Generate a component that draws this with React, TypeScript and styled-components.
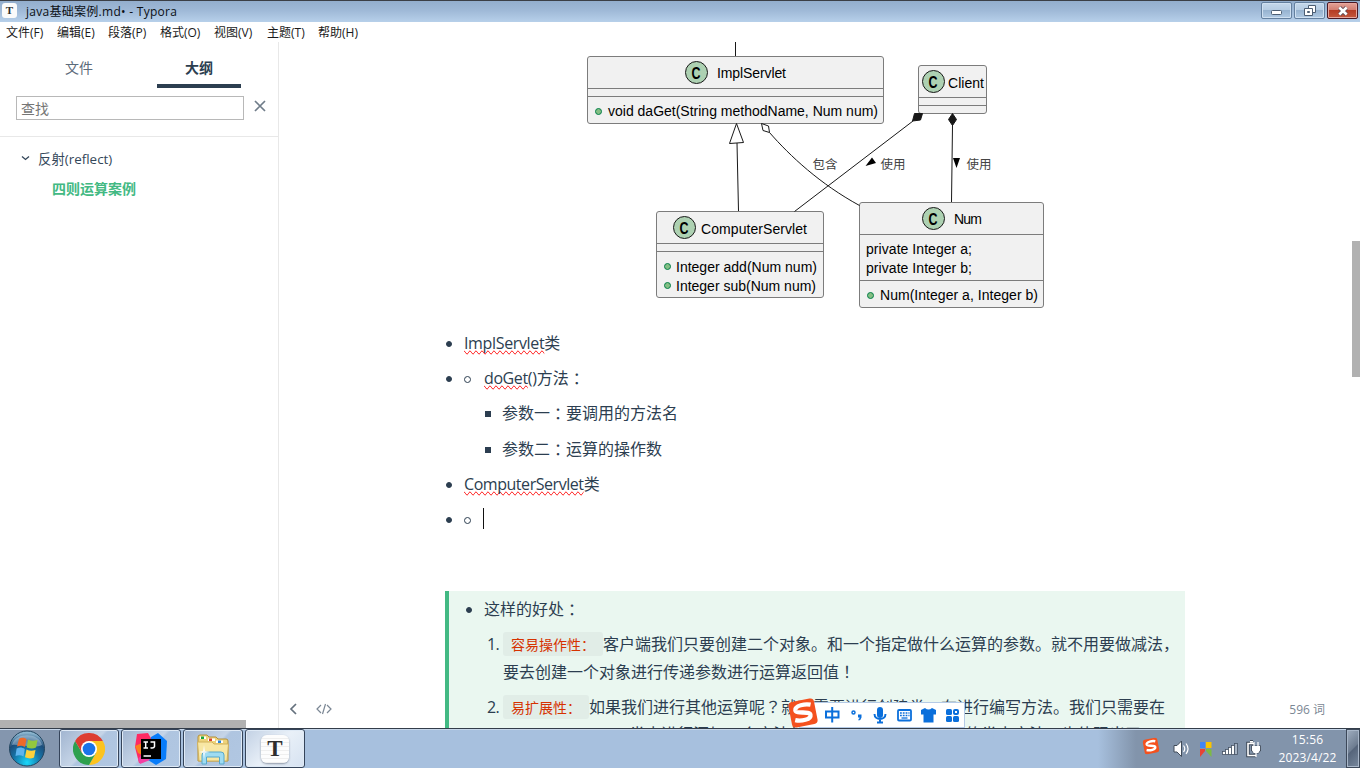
import React from "react";
import styled, { createGlobalStyle, css } from "styled-components";

const Global = createGlobalStyle`
  *, *::before { box-sizing: border-box; }
  html, body { margin: 0; padding: 0; overflow: hidden; background: #fff; }
`;

const uiFont = `"Open Sans", "Noto Sans CJK SC", sans-serif`;

const Window = styled.div`
  width: 1360px;
  height: 768px;
  display: flex;
  flex-direction: column;
  overflow: hidden;
  font-family: ${uiFont};
  color: #2c3e50;
  background: #fff;
  white-space: nowrap;
`;

const TitleBar = styled.header`
  height: 22px;
  flex: none;
  display: flex;
  align-items: center;
  padding: 0 2px 0 2px;
  border-top: 1px solid #3b3f46;
  background: linear-gradient(#93aecd, #9fb9d7 45%, #b7d0ea);
`;

const AppBadge = styled.span<{ $large?: boolean }>`
  display: flex;
  align-items: center;
  justify-content: center;
  background: #fbfbfb;
  color: #2e2e2e;
  font-family: "Liberation Serif", serif;
  font-weight: 700;
  ${(p) =>
    p.$large
      ? css`
          width: 28px;
          height: 28px;
          border-radius: 6px;
          font-size: 23px;
          line-height: 28px;
          box-shadow: 0 1px 2px rgba(60, 70, 90, 0.5);
          background: repeating-linear-gradient(#fdfdfd 0 3px, #efefef 3px 4px);
        `
      : css`
          width: 15px;
          height: 15px;
          border-radius: 3px;
          font-size: 11px;
          line-height: 15px;
          margin-bottom: 2px;
        `}
`;

const Title = styled.span`
  margin-left: 9px;
  flex: 1;
  font-size: 12px;
  letter-spacing: 0.28px;
  line-height: 18px;
  color: #0b0f14;
`;

const Controls = styled.div`
  display: flex;
  gap: 2px;
  align-self: flex-start;
  padding-top: 1px;
`;

const ControlButton = styled.button<{ $danger?: boolean }>`
  width: 31px;
  height: 17px;
  padding: 0;
  border-radius: 2px;
  border: 1px solid ${(p) => (p.$danger ? "#4b1823" : "#64809f")};
  box-shadow: inset 0 0 0 1px ${(p) => (p.$danger ? "#e7a79e" : "#cfe0f1")};
  background: ${(p) =>
    p.$danger
      ? "linear-gradient(#e3a297, #d27d70 46%, #b53c25 50%, #c4593f)"
      : "linear-gradient(#c5d8eb, #b5cce3 46%, #97b3d0 50%, #b0cae3)"};
  display: flex;
  align-items: center;
  justify-content: center;
`;

const MenuBar = styled.nav`
  height: 20px;
  flex: none;
  display: flex;
  padding-left: 6px;
  font-size: 12px;
  line-height: 21px;
  color: #1a1a1a;
`;

const MenuItem = styled.span<{ $w: number }>`
  width: ${(p) => p.$w}px;
`;

const Body = styled.div`
  flex: 1;
  min-height: 0;
  display: flex;
`;

const Sidebar = styled.aside`
  width: 279px;
  border-right: 1px solid #e8e8e8;
  display: flex;
  flex-direction: column;
`;

const Tabs = styled.div`
  display: flex;
  height: 46px;
  padding-left: 37px;
  gap: 36px;
`;

const Tab = styled.div<{ $active?: boolean }>`
  width: 84px;
  text-align: center;
  font-size: 14px;
  line-height: 52px;
  color: ${(p) => (p.$active ? "#2c3e50" : "#5c6b7a")};
  font-weight: ${(p) => (p.$active ? 700 : 400)};
  border-bottom: 4px solid ${(p) => (p.$active ? "#2c3e50" : "transparent")};
`;

const SearchRow = styled.div`
  display: flex;
  align-items: flex-start;
  height: 49px;
  padding: 8px 0 0 16px;
  border-bottom: 1px solid #e8e8e8;
  gap: 10px;
`;

const SearchBox = styled.div`
  width: 228px;
  height: 24px;
  padding-left: 4px;
  border: 1px solid #b8b8b8;
  font-size: 14px;
  line-height: 23px;
  color: #757575;
`;

const OutlineRow = styled.div<{ $active?: boolean }>`
  display: flex;
  align-items: center;
  height: 30px;
  font-size: ${(p) => (p.$active ? 14 : 13.4)}px;
  padding-left: ${(p) => (p.$active ? 52 : 20)}px;
  color: ${(p) => (p.$active ? "#42b983" : "#34475a")};
  font-weight: ${(p) => (p.$active ? 700 : 400)};
  svg { margin-right: 7px; }
`;

const Outline = styled.div`
  flex: 1;
  padding-top: 6px;
`;

const SideScroll = styled.div`
  width: 246px;
  height: 8px;
  background: #b1b1b1;
`;

const Main = styled.main`
  flex: 1;
  display: flex;
  overflow: hidden;
`;

const LeftTools = styled.div`
  width: 166px;
  display: flex;
  align-items: flex-end;
  gap: 18px;
  padding: 0 0 12px 10px;
`;

const Article = styled.article`
  width: 740px;
  height: 686px;
  overflow: hidden;
  font-size: 16px;
  line-height: 27.2px;
`;

const RightTools = styled.div`
  flex: 1;
  display: flex;
  align-items: flex-end;
  justify-content: flex-end;
  padding: 0 27px 9px 0;
  font-size: 12px;
  line-height: 18px;
  color: #7b8794;
`;

const ScrollTrack = styled.div`
  width: 8px;
  padding-top: 199px;
`;

const ScrollThumb = styled.div`
  height: 136px;
  background: #b1b1b1;
`;

const Diagram = styled.svg`
  display: block;
  width: 740px;
  height: 288px;
  text { font-family: "Liberation Sans", "Noto Sans CJK SC", sans-serif; }
`;

const Row = styled.div`
  display: flex;
  align-items: flex-start;
  height: 27.2px;
  margin-bottom: 8px;
`;

const Marker = styled.span<{ $kind: "disc" | "circle" | "square"; $w: number }>`
  flex: none;
  width: ${(p) => p.$w}px;
  height: 27.2px;
  display: flex;
  align-items: center;
  &::before {
    content: "";
    width: ${(p) => (p.$kind === "circle" ? 7 : 6)}px;
    height: ${(p) => (p.$kind === "circle" ? 7 : 6)}px;
    margin-left: ${(p) => (p.$kind === "square" ? 2 : 1)}px;
    margin-top: 1px;
    border-radius: ${(p) => (p.$kind === "square" ? 0 : "50%")};
    border: 1px solid #2c3e50;
    background: ${(p) => (p.$kind === "circle" ? "transparent" : "#2c3e50")};
  }
`;

const Indent = styled.span`
  flex: none;
  width: 38px;
`;

const Typo = styled.span<{ $ls: number }>`
  letter-spacing: ${(p) => p.$ls}px;
  text-decoration: spelling-error;
`;

const Tight = styled.span`
  letter-spacing: -0.2px;
`;

const Wide = styled.span`
  font-family: "Noto Sans CJK TC", sans-serif;
`;

const Caret = styled.span`
  width: 1px;
  height: 21px;
  margin: 2px 0 0 0;
  background: #111;
`;

const Quote = styled.blockquote`
  margin: 58px 0 0;
  height: 140px;
  padding: 5px 0 0 16px;
  border-left: 4px solid #42b983;
  background: #eaf7f0;
`;

const Numbered = styled.div`
  display: flex;
  margin-bottom: 8px;
  ${Wide} { line-height: 1; }
`;

const Num = styled.span`
  flex: none;
  width: 38px;
  padding-left: 22px;
  letter-spacing: -0.6px;
`;

const Code = styled.code`
  padding: 2px 8px;
  border-radius: 3px;
  background: #e1ede7;
  color: #d63200;
  font-family: "Noto Sans CJK SC", sans-serif;
  font-size: 14px;
  line-height: 1;
`;

const ImeBar = styled.div`
  position: absolute;
  left: 799px;
  top: 702px;
  width: 166px;
  height: 26px;
  display: flex;
  align-items: center;
  background: #fff;
  border: 1px solid #b4cae6;
`;

const ImeIcons = styled.svg`
  margin-left: -12px;
  margin-top: -4px;
  flex: none;
`;

const Taskbar = styled.footer`
  height: 40px;
  flex: none;
  display: flex;
  border-top: 1px solid #333d4a;
  box-shadow: inset 0 1px 0 #c7d7ea;
  background: linear-gradient(90deg, #8496ae 0 60px, #a7c0de 62px 1098px, #8294ab 1136px);
`;

const Start = styled.div`
  width: 59px;
  padding: 1px 0 0 8px;
`;

const Task = styled.div<{ $on?: boolean }>`
  width: 60px;
  height: 39px;
  margin-right: 2px;
  display: flex;
  align-items: center;
  justify-content: center;
  border: 1px solid #35445a;
  border-radius: 3px;
  box-shadow: inset 0 0 0 1px #dfeaf6;
  background: ${(p) =>
    p.$on
      ? "linear-gradient(135deg, #c2d1e4, #e9f0f8 50%, #d6e2f1)"
      : "linear-gradient(135deg, #a0b4cf, #c6d5e8 48%, #afc5e0 52%, #b1c7e2)"};
`;

const Tray = styled.div`
  margin-left: auto;
  display: flex;
  align-items: center;
`;

const Clock = styled.div`
  width: 75px;
  margin-left: 3px;
  font-size: 12px;
  letter-spacing: 0.15px;
  line-height: 18px;
  text-align: center;
  color: #fff;
`;

const ShowDesktop = styled.div`
  width: 14px;
  height: 39px;
  margin-left: 1px;
  border: 1px solid #3c4859;
  box-shadow: inset 0 0 0 1px #a9b7c9;
  background: linear-gradient(135deg, #a0aec0, #6d7c90 50%, #55647a 52%, #78889d);
`;

const ClassIcon = ({ x, y }: { x: number; y: number }) => (
  <g>
    <circle cx={x} cy={y} r="11" fill="#add1b2" stroke="#181818" />
    <text x={x - 0.5} y={y + 6} fontSize="17" fontWeight="700" textAnchor="middle" textLength="9" lengthAdjust="spacingAndGlyphs">C</text>
  </g>
);

const Label = ({ x, y, w, children }: { x: number; y: number; w: number; children: string }) => (
  <text x={x} y={y} fontSize="14" textLength={w} fill="#000">{children}</text>
);

const ClassBox = ({ x, y, w, h, lines }: { x: number; y: number; w: number; h: number; lines: number[] }) => (
  <g stroke="#7c7c7c">
    <rect x={x} y={y} width={w} height={h} rx="2.5" fill="#f1f1f1" />
    {lines.map((l) => <path key={l} d={`M${x} ${l}h${w}`} />)}
  </g>
);

const PublicDot = ({ x, y }: { x: number; y: number }) => (
  <circle cx={x} cy={y} r="3" fill="#84be84" stroke="#038048" />
);

const UmlDiagram = () => (
  <Diagram viewBox="445 42 740 288">
    <ClassBox x={587.5} y={56.5} w={296} h={67} lines={[88.5, 96.5]} />
    <ClassBox x={918.5} y={65.5} w={68} h={48} lines={[97.5, 105.5]} />
    <ClassBox x={656.5} y={211.5} w={167} h={86} lines={[243.5, 251.5]} />
    <ClassBox x={859.5} y={202.5} w={184} h={105} lines={[234.5, 280.5]} />
    <ClassIcon x={696.5} y={72.5} />
    <ClassIcon x={933.5} y={81.5} />
    <ClassIcon x={684.5} y={227.5} />
    <ClassIcon x={933.5} y={218.5} />
    <Label x={717} y={78} w={69}>ImplServlet</Label>
    <Label x={948} y={88} w={36}>Client</Label>
    <Label x={701} y={234} w={106}>ComputerServlet</Label>
    <Label x={954} y={224} w={28}>Num</Label>
    <PublicDot x={598.5} y={111.5} />
    <Label x={608} y={116} w={270}>void daGet(String methodName, Num num)</Label>
    <PublicDot x={667.5} y={266.5} />
    <Label x={676} y={272} w={141}>Integer add(Num num)</Label>
    <PublicDot x={667.5} y={285.5} />
    <Label x={676} y={291} w={140}>Integer sub(Num num)</Label>
    <Label x={866} y={254} w={106}>private Integer a;</Label>
    <Label x={866} y={273} w={106}>private Integer b;</Label>
    <PublicDot x={870.5} y={295.5} />
    <Label x={880} y={300} w={158}>Num(Integer a, Integer b)</Label>
    <g fill="none" stroke="#181818">
      <path d="M735.5 42V56" />
      <path d="M736.5 123.5L729.5 143.5L743.5 142.5ZM737 143L738.5 211" />
      <path d="M761.5 123.5L763 130.5L769.5 132.5L768.5 126ZM769.5 132.5C790 156 820 184 859.5 205.5" />
      <path d="M913 121L794.5 211.5" />
      <path d="M952.5 125L951.5 202" />
      <path fill="#181818" d="M914.5 113.5H922.5L920.5 120L912.5 121ZM952.5 113.5L956.5 119.5L952.5 125.5L948.5 119.5Z" />
    </g>
    <path d="M872 157.5L865.5 166L876 163ZM953 158H960L956.5 168Z" />
    <g fontSize="12.5" fill="#444">
      <text x="812.5" y="169" textLength="25">包含</text>
      <text x="880.5" y="169" textLength="25">使用</text>
      <text x="966.5" y="169" textLength="25">使用</text>
    </g>
  </Diagram>
);

const SogouMark = ({ size }: { size: number }) => (
  <svg width={size} height={size} viewBox="0 0 30 30">
    <g transform="rotate(-11 15 15)">
      <rect x="2" y="2" width="26" height="26" rx="4" fill="#f4511e" />
      <path d="M24 8.300C19 6.200 8.500 6 8 10.800C7.800 15.500 22 13.500 22 18.200C22 23 11.500 23 6 20.500" fill="none" stroke="#fff" strokeWidth="4.300" />
    </g>
  </svg>
);

const ImeGlyphs = () => (
  <ImeIcons width="178" height="30" viewBox="788 698 178 30">
    <g transform="translate(788 698)"><SogouMark size={30} /></g>
    <g fill="none" stroke="#0a6fdb" strokeWidth="2">
      <path d="M826 711.500H838.500V717.500H826ZM832.200 707V722.500" />
      <circle cx="853.500" cy="712.500" r="1.500" strokeWidth="1.500" />
      <path d="M874.500 714C874.500 720.500 885.500 720.500 885.500 714M880 719V722.500M877 722.500H883" />
      <rect x="898" y="710" width="13" height="10.500" rx="1" strokeWidth="1.800" />
      <path d="M900 713H909.500M900 715.500H909.500" strokeWidth="1.300" strokeDasharray="1.800 1" />
      <path d="M901.500 718H907.500" strokeWidth="1.300" />
    </g>
    <g fill="#0a6fdb">
      <path d="M858 714.500H861.500V717.500Q861 720 858.500 720.500V719Q859.800 718.500 859.500 717.500H858Z" />
      <rect x="877" y="707" width="6" height="11" rx="3" />
      <path d="M921 710L925 708Q928.500 711 932 708L936 710V714.500H933.500V722.500H923.500V714.500H921Z" />
      <rect x="946" y="709" width="6" height="6" rx="1.500" />
      <rect x="946" y="716" width="6" height="6" rx="1.500" />
      <rect x="953" y="716" width="6" height="6" rx="1.500" />
    </g>
    <rect x="954" y="710" width="4" height="4" rx="1" fill="none" stroke="#0a6fdb" strokeWidth="2" />
  </ImeIcons>
);

const StartOrb = () => (
  <svg width="38" height="37" viewBox="0 0 38 37">
    <defs>
      <radialGradient id="orb" cx=".5" cy=".9" r=".85">
        <stop offset="0" stopColor="#19d8fa" />
        <stop offset=".45" stopColor="#1575a8" />
        <stop offset=".75" stopColor="#1c4d7b" />
        <stop offset="1" stopColor="#8db7d0" />
      </radialGradient>
    </defs>
    <circle cx="19" cy="18.500" r="17.500" fill="url(#orb)" stroke="#23455f" />
    <path d="M4 15C7 2 31 2 34 15C26 19 12 14 4 15Z" fill="#d4e7f2" opacity=".4" />
    <path d="M11 9C14 7 16 8 18.500 9L17 17C14 15.500 12 15.500 9 16.500Z" fill="#ee6a29" />
    <path d="M20 9.500C23 11 26 11 29.500 10L28 17.500C25 19 22 18.500 18.700 17.500Z" fill="#93c83e" />
    <path d="M8.600 18.500C12 17 14 17.500 16.800 19L15.500 26.500C13 25 10 25 7.500 26Z" fill="#5fb4ee" />
    <path d="M18.500 19.500C21.500 21 24 21 27.500 20L26 27.500C23 29 20 28.500 17 27.300Z" fill="#fbd13c" />
  </svg>
);

const ChromeIcon = () => (
  <svg width="32" height="32" viewBox="0 0 32 32">
    <path d="M16 8H29.860A16 16 0 0 1 16 32L22.900 20Z" fill="#fcc31e" />
    <path d="M9.100 20L2.140 8A16 16 0 0 0 16 32L22.900 20Z" fill="#2da04e" />
    <path d="M2.140 8A16 16 0 0 1 29.860 8H16L9.100 20Z" fill="#dd3d31" />
    <circle cx="16" cy="16" r="8" fill="#fff" />
    <circle cx="16" cy="16" r="6.300" fill="#1a73e8" />
  </svg>
);

const IdeaIcon = () => (
  <svg width="34" height="34" viewBox="0 0 34 34">
    <path d="M3 2L14 1L18 8L10 30L5 31L1 15Z" fill="#fe2a63" />
    <path d="M1 14L8 11L10 24L4 21Z" fill="#fc801d" />
    <path d="M17 5L24 1L33 9L32 27L22 33L14 28Z" fill="#087cfa" />
    <path d="M4 27L10 20L16 28L6 32Z" fill="#f43fa3" />
    <rect x="7" y="7" width="20" height="20" fill="#000" />
    <path d="M9.500 10H14M11.700 10V16M9.500 16H14M16.500 10H20.500V14.500Q20 16.500 16.500 15.800M9.500 24H17" fill="none" stroke="#fff" strokeWidth="1.500" />
  </svg>
);

const FolderIcon = () => (
  <svg width="34" height="32" viewBox="0 0 34 32">
    <path d="M2 4Q2 2 4 2H11L13 4H20L22 6H30Q32 6 32 8V28H2Z" fill="#eed37b" stroke="#b3913c" />
    <path d="M4 3.500H10V6H4Z" fill="#fff" /><path d="M5 3.500H8V6H5Z" fill="#17a53b" />
    <path d="M12 5.500H19V8H12Z" fill="#fff" /><path d="M13 5.500H16V8H13Z" fill="#d9442b" />
    <path d="M20 7.500H27V10H20Z" fill="#fff" /><path d="M22 7.500H25V10H22Z" fill="#2784d8" />
    <path d="M1.500 9H16L18 11H32.500L31 28H3Z" fill="#f8e7a4" stroke="#d1b25c" />
    <path d="M6 31V22Q6 19 9 19H25Q28 19 28 22V31H23.500V24H10.500V31Z" fill="#9fdcf2" stroke="#57a8cc" />
    <path d="M8 12L9 18L14 19L9 20L8 26L7 20L3 19L7 18Z" fill="#fff" opacity=".8" />
  </svg>
);

const TrayIcons = () => (
  <svg width="128" height="39" viewBox="1139 729 128 39">
    <g transform="translate(1142.500 737.500)"><SogouMark size={17} /></g>
    <path d="M1174 745.500H1177L1181.500 741V756.500L1177 752H1174Z" fill="#fff" stroke="#404b59" />
    <path d="M1183.500 745.500Q1186 748.700 1183.500 752M1186 743.500Q1190 748.700 1186 754" fill="none" stroke="#fff" strokeWidth="1.200" />
    <path d="M1200 742H1205V748H1200Z" fill="#4285f4" />
    <path d="M1206 742H1211.500V748H1206Z" fill="#fbc400" />
    <path d="M1200 749H1205V751L1200 757Z" fill="#e84335" />
    <path d="M1206 749H1211.500V757L1206 751Z" fill="#7dbb42" />
    <g fill="#fff" stroke="#465364" strokeWidth=".8">
      <rect x="1222.500" y="751.500" width="3" height="3" /><rect x="1225.500" y="749.500" width="3" height="5" />
      <rect x="1228.500" y="747.500" width="3" height="7" /><rect x="1231.500" y="745.500" width="3" height="9" />
      <rect x="1234.500" y="743.500" width="3" height="11" fill="#aab6c5" />
    </g>
    <path d="M1254 743.500H1248V755.500H1256M1250 741.800H1253" fill="none" stroke="#3c4756" strokeWidth="3.500" />
    <path d="M1254 743.500H1248V755.500H1256M1250 741.800H1253" fill="none" stroke="#fff" strokeWidth="1.600" />
    <path d="M1251 745.500H1261V750.500L1258.500 753.500H1253.500L1251 750.500Z" fill="#3c4756" />
    <path d="M1252.500 746.500H1259.500V750L1258 752.500H1254L1252.500 750ZM1254 742V746M1258 742V746M1256 752V757" fill="#fff" stroke="#fff" strokeWidth="1.200" />
  </svg>
);

const menus: [string, number][] = [
  ["文件(F)", 51], ["编辑(E)", 51], ["段落(P)", 52], ["格式(O)", 54],
  ["视图(V)", 53], ["主题(T)", 51], ["帮助(H)", 50],
];

export default function App() {
  return (
    <Window>
      <Global />
      <TitleBar>
        <AppBadge>T</AppBadge>
        <Title>java基础案例.md• - Typora</Title>
        <Controls>
          <ControlButton>
            <svg width="12" height="9"><rect x=".5" y="4.500" width="10" height="4" rx="1" fill="#fff" stroke="#4d5e73" /></svg>
          </ControlButton>
          <ControlButton>
            <svg width="12" height="12" fill="#fff" stroke="#4d5e73">
              <path d="M4.500.500H11.500V7.500H4.500Z" /><path d="M.500 3.500H8.500V10.500H.500Z" /><path d="M3.500 6.500H5.500V7.500H3.500Z" fill="#9ab" />
            </svg>
          </ControlButton>
          <ControlButton $danger>
            <svg width="12" height="10" viewBox="0 0 12 10">
              <path d="M2.500 1.500L9.500 8.500M9.500 1.500L2.500 8.500" stroke="#5b4a55" strokeWidth="4.200" />
              <path d="M2.300 1.500L9.700 8.500M9.700 1.500L2.300 8.500" stroke="#fff" strokeWidth="2.600" />
            </svg>
          </ControlButton>
        </Controls>
      </TitleBar>
      <MenuBar>
        {menus.map(([name, w]) => <MenuItem key={name} $w={w}>{name}</MenuItem>)}
      </MenuBar>
      <Body>
        <Sidebar>
          <Tabs>
            <Tab>文件</Tab>
            <Tab $active>大纲</Tab>
          </Tabs>
          <SearchRow>
            <SearchBox>查找</SearchBox>
            <svg width="12" height="20"><path d="M1 5L11 15M11 5L1 15" stroke="#6f7c89" strokeWidth="1.700" /></svg>
          </SearchRow>
          <Outline>
            <OutlineRow>
              <svg width="11" height="8"><path d="M2 2.500L5.500 5.500L9 2.500" fill="none" stroke="#34475a" strokeWidth="1.300" /></svg>
              反射(reflect)
            </OutlineRow>
            <OutlineRow $active>四则运算案例</OutlineRow>
          </Outline>
          <SideScroll />
        </Sidebar>
        <Main>
          <LeftTools>
            <svg width="9" height="14" fill="none" stroke="#65717e" strokeWidth="1.700"><path d="M7 2L2 7L7 12" /></svg>
            <svg width="16" height="14" fill="none" stroke="#7b8794" strokeWidth="1.200"><path d="M5 3L1 7L5 11M11 3L15 7L11 11M9.500 2L6.500 12" /></svg>
          </LeftTools>
          <Article>
            <UmlDiagram />
            <Row><Marker $kind="disc" $w={19} /><Typo $ls={-0.35}>ImplServlet</Typo>类</Row>
            <Row>
              <Marker $kind="disc" $w={18} /><Marker $kind="circle" $w={21} />
              <Typo $ls={-0.4}>doGet</Typo><Tight>()</Tight>方法<Wide>：</Wide>
            </Row>
            <Row><Indent /><Marker $kind="square" $w={19} />参数一<Wide>：</Wide>要调用的方法名</Row>
            <Row><Indent /><Marker $kind="square" $w={19} />参数二<Wide>：</Wide>运算的操作数</Row>
            <Row><Marker $kind="disc" $w={19} /><Typo $ls={-0.45}>ComputerServlet</Typo>类</Row>
            <Row><Marker $kind="disc" $w={18} /><Marker $kind="circle" $w={20} /><Caret /></Row>
            <Quote>
              <Row><Marker $kind="disc" $w={19} />这样的好处<Wide>：</Wide></Row>
              <Numbered>
                <Num>1.</Num>
                <div>
                  <Code>容易操作性：</Code>客户端我们只要创建二个对象。和一个指定做什么运算的参数。就不用要做减法，<br />
                  要去创建一个对象进行传递参数进行运算返回值<Wide>！</Wide>
                </div>
              </Numbered>
              <Numbered>
                <Num>2.</Num>
                <div>
                  <Code>易扩展性：</Code>如果我们进行其他运算呢<Wide>？</Wide>就不需要进行创建类，在进行编写方法。我们只需要在<br />
                  ComputerServlet类中进行添加一个方法就可以，不会影响到其他的类中方法，也体现出了
                </div>
              </Numbered>
            </Quote>
          </Article>
          <RightTools>596 词</RightTools>
          <ScrollTrack><ScrollThumb /></ScrollTrack>
        </Main>
      </Body>
      <ImeBar><ImeGlyphs /></ImeBar>
      <Taskbar>
        <Start><StartOrb /></Start>
        <Task><ChromeIcon /></Task>
        <Task><IdeaIcon /></Task>
        <Task><FolderIcon /></Task>
        <Task $on><AppBadge $large>T</AppBadge></Task>
        <Tray>
          <TrayIcons />
          <Clock>15:56<br />2023/4/22</Clock>
          <ShowDesktop />
        </Tray>
      </Taskbar>
    </Window>
  );
}
